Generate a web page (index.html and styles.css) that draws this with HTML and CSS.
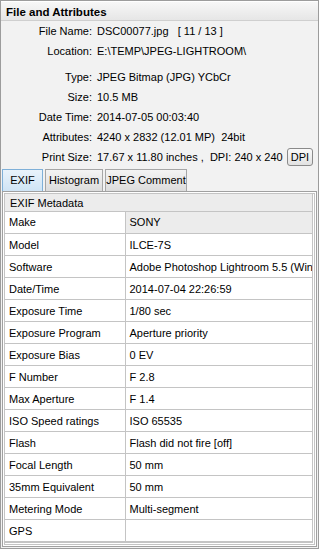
FILE: index.html
```html
<!DOCTYPE html>
<html lang="en">
<head>
  <meta charset="UTF-8" />
  <title>File and Attributes</title>
  <link rel="stylesheet" href="styles.css">
</head>
<body>
  <div class="window">
    <div class="title">File and Attributes</div>

    <div class="info">
      <div class="row"><span class="label">File Name:</span><span class="value">DSC00077.jpg &nbsp;&nbsp;[ 11 / 13 ]</span></div>
      <div class="row"><span class="label">Location:</span><span class="value">E:\TEMP\JPEG-LIGHTROOM\</span></div>
      <div class="spacer"></div>
      <div class="row"><span class="label">Type:</span><span class="value">JPEG Bitmap (JPG) YCbCr</span></div>
      <div class="row"><span class="label">Size:</span><span class="value">10.5 MB</span></div>
      <div class="row"><span class="label">Date Time:</span><span class="value">2014-07-05 00:03:40</span></div>
      <div class="row"><span class="label">Attributes:</span><span class="value">4240 x 2832 (12.01 MP) &nbsp;24bit</span></div>
      <div class="row"><span class="label">Print Size:</span><span class="value">17.67 x 11.80 inches , &nbsp;DPI: 240 x 240</span><button class="dpi">DPI</button></div>
    </div>

    <div class="tabs">
      <div class="tab active">EXIF</div>
      <div class="tab">Histogram</div>
      <div class="tab wide">JPEG Comment</div>
    </div>

    <div class="panel">
      <div class="panel-inner">
        <div class="panel-head">EXIF Metadata</div>
        <table class="exif">
          <tr class="sel"><td>Make</td><td>SONY</td></tr>
          <tr><td>Model</td><td>ILCE-7S</td></tr>
          <tr><td>Software</td><td>Adobe Photoshop Lightroom 5.5 (Windows)</td></tr>
          <tr><td>Date/Time</td><td>2014-07-04 22:26:59</td></tr>
          <tr><td>Exposure Time</td><td>1/80 sec</td></tr>
          <tr><td>Exposure Program</td><td>Aperture priority</td></tr>
          <tr><td>Exposure Bias</td><td>0 EV</td></tr>
          <tr><td>F Number</td><td>F 2.8</td></tr>
          <tr><td>Max Aperture</td><td>F 1.4</td></tr>
          <tr><td>ISO Speed ratings</td><td>ISO 65535</td></tr>
          <tr><td>Flash</td><td>Flash did not fire [off]</td></tr>
          <tr><td>Focal Length</td><td>50 mm</td></tr>
          <tr><td>35mm Equivalent</td><td>50 mm</td></tr>
          <tr><td>Metering Mode</td><td>Multi-segment</td></tr>
          <tr><td>GPS</td><td></td></tr>
        </table>
      </div>
    </div>
  </div>
</body>
</html>
```

FILE: styles.css
```css
* {
  box-sizing: border-box;
}
body {
  margin: 0;
  font-family: "Liberation Sans", Arial, sans-serif;
  font-size: 11px;
  color: #000;
  background: #fff;
}
.window {
  width: 319px;
  height: 549px;
  border: 1px solid #9c9c9c;
  background: #f2f2f2;
  display: flex;
  flex-direction: column;
  overflow: hidden;
}
.title {
  height: 20px;
  padding: 1px 0 0 5px;
  font-size: 11.5px;
  font-weight: bold;
  line-height: 18px;
  border-top: 1px solid #fff;
  border-bottom: 1px solid #cfcfcf;
  background: linear-gradient(#f7f7f7, #e6e6e6);
}
.info {
  padding-right: 5px;
}
.row {
  display: flex;
  align-items: center;
  height: 20px;
}
.label {
  flex-shrink: 0;
  width: 91px;
  text-align: right;
}
.value {
  margin-left: 5px;
  white-space: nowrap;
}
.spacer {
  height: 6px;
}
.dpi {
  flex-shrink: 0;
  margin-left: auto;
  height: 18px;
  width: 26px;
  padding: 0;
  font-family: inherit;
  font-size: 11px;
  border: 1px solid #8a8a8a;
  border-radius: 3px;
  background: linear-gradient(#fafafa, #e2e2e2);
}
.tabs {
  display: flex;
  gap: 2px;
  margin-top: 2px;
  padding-left: 1px;
  height: 22px;
}
.tab {
  width: 58px;
  text-align: center;
  line-height: 20px;
  border: 1px solid #a6a6a6;
  border-bottom: none;
  background: linear-gradient(#f4f4f4, #dcdcdc);
}
.tab.active {
  width: 41px;
  border-color: #7fb0d8;
  background: linear-gradient(#e9f3fb, #cfe4f5);
}
.tab.wide {
  width: 82px;
}
.panel {
  flex: 1;
  margin: 0 1px 1px 1px;
  border: 1px solid #a0a0a0;
  background: #fff;
  padding: 1px;
}
.panel-inner {
  height: 100%;
  border: 1px solid #c4c4c4;
  border-right-width: 3px;
  border-bottom-width: 3px;
  border-right-style: double;
  border-bottom-style: double;
}
.panel-head {
  height: 18px;
  line-height: 18px;
  padding-left: 5px;
  background: #ececec;
  border-bottom: 1px solid #c4c4c4;
}
.exif {
  width: 100%;
  border-collapse: collapse;
  table-layout: fixed;
}
.exif td {
  height: 22px;
  padding: 0 4px;
  border: 1px solid #c4c4c4;
  border-top: none;
  white-space: nowrap;
  overflow: hidden;
}
.exif td:first-child {
  width: 120px;
  border-left: none;
}
.exif td:last-child {
  border-right: none;
}
.exif tr.sel td:last-child {
  background: #ececec;
}
```
